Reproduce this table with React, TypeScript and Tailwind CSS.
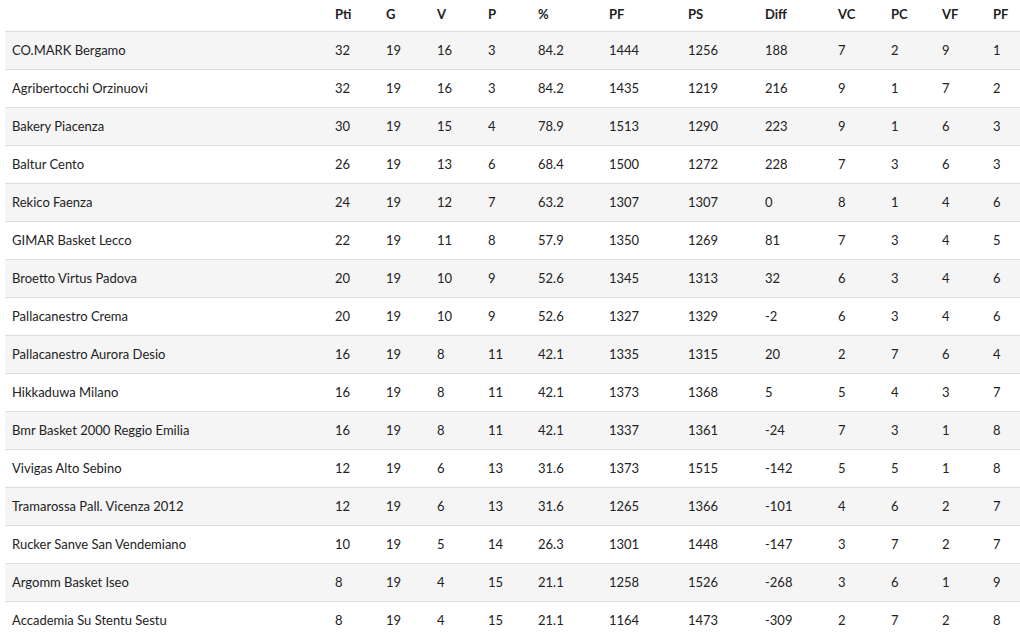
import React from 'react'

const cols = ['Pti', 'G', 'V', 'P', '%', 'PF', 'PS', 'Diff', 'VC', 'PC', 'VF', 'PF']

const rows: (string | number)[][] = [
    ['CO.MARK Bergamo', 32, 19, 16, 3, '84.2', 1444, 1256, 188, 7, 2, 9, 1],
    ['Agribertocchi Orzinuovi', 32, 19, 16, 3, '84.2', 1435, 1219, 216, 9, 1, 7, 2],
    ['Bakery Piacenza', 30, 19, 15, 4, '78.9', 1513, 1290, 223, 9, 1, 6, 3],
    ['Baltur Cento', 26, 19, 13, 6, '68.4', 1500, 1272, 228, 7, 3, 6, 3],
    ['Rekico Faenza', 24, 19, 12, 7, '63.2', 1307, 1307, 0, 8, 1, 4, 6],
    ['GIMAR Basket Lecco', 22, 19, 11, 8, '57.9', 1350, 1269, 81, 7, 3, 4, 5],
    ['Broetto Virtus Padova', 20, 19, 10, 9, '52.6', 1345, 1313, 32, 6, 3, 4, 6],
    ['Pallacanestro Crema', 20, 19, 10, 9, '52.6', 1327, 1329, -2, 6, 3, 4, 6],
    ['Pallacanestro Aurora Desio', 16, 19, 8, 11, '42.1', 1335, 1315, 20, 2, 7, 6, 4],
    ['Hikkaduwa Milano', 16, 19, 8, 11, '42.1', 1373, 1368, 5, 5, 4, 3, 7],
    ['Bmr Basket 2000 Reggio Emilia', 16, 19, 8, 11, '42.1', 1337, 1361, -24, 7, 3, 1, 8],
    ['Vivigas Alto Sebino', 12, 19, 6, 13, '31.6', 1373, 1515, -142, 5, 5, 1, 8],
    ['Tramarossa Pall. Vicenza 2012', 12, 19, 6, 13, '31.6', 1265, 1366, -101, 4, 6, 2, 7],
    ['Rucker Sanve San Vendemiano', 10, 19, 5, 14, '26.3', 1301, 1448, -147, 3, 7, 2, 7],
    ['Argomm Basket Iseo', 8, 19, 4, 15, '21.1', 1258, 1526, -268, 3, 6, 1, 9],
    ['Accademia Su Stentu Sestu', 8, 19, 4, 15, '21.1', 1164, 1473, -309, 2, 7, 2, 8],
]

const grid = 'grid grid-cols-[323px_51px_51px_51px_50px_71px_79px_77px_73px_53px_51px_51px_34px]'

const App = () => {
    return (
        <div className="h-[635px] w-[1020px] overflow-hidden bg-white pl-[5px] text-[13px] text-[#222] font-['Lato','Liberation_Sans',sans-serif]">
            <div className={`${grid} h-[31px] items-start pt-[5px] font-bold`}>
                <div></div>
                {cols.map((c, i) => (
                    <div key={i} className="pl-[7px]">{c}</div>
                ))}
            </div>
            {rows.map((r, i) => (
                <div
                    key={i}
                    className={`${grid} h-[38px] items-center border-t border-[#dedede] ${i % 2 === 0 ? 'bg-[#f5f5f5]' : 'bg-white'}`}
                >
                    {r.map((v, j) => (
                        <div key={j} className="pl-[7px] whitespace-nowrap">{v}</div>
                    ))}
                </div>
            ))}
        </div>
    )
}

export default App
